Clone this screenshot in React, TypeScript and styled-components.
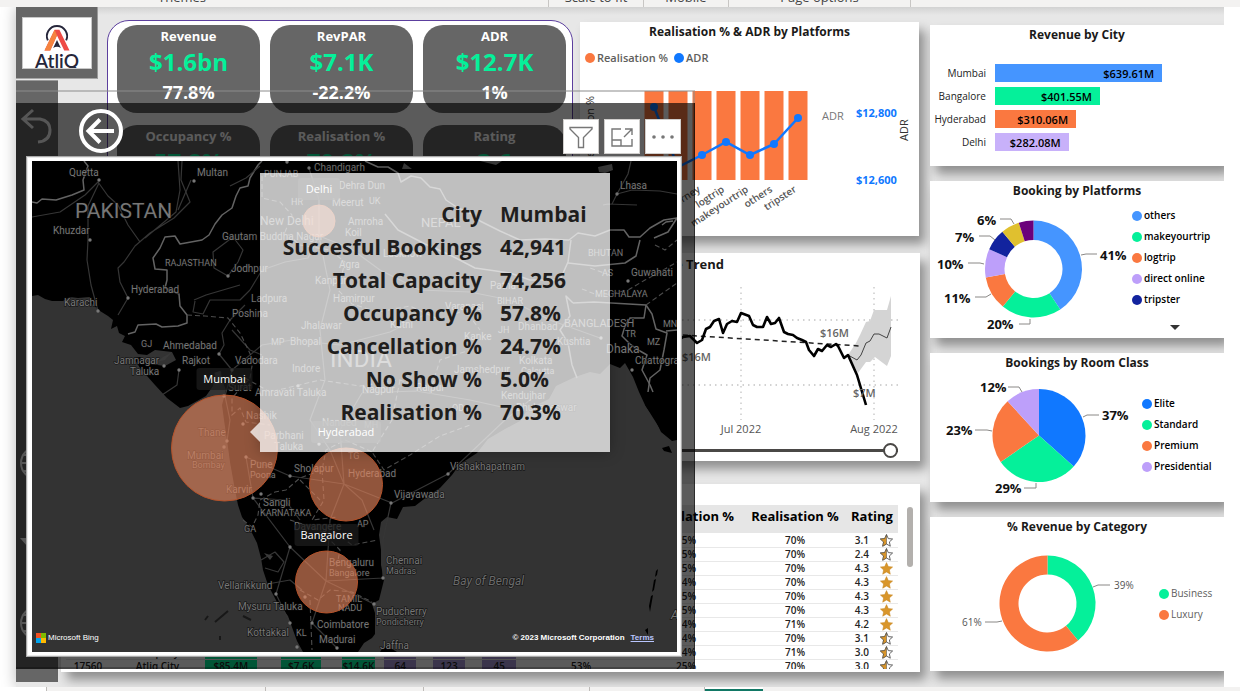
import React from "react";
import styled, { createGlobalStyle } from "styled-components";

const UI = `"Segoe UI", "Open Sans", "Noto Sans", sans-serif`;
const MAP = `Roboto, "Noto Sans", sans-serif`;

const C = {
  orange: "#fa7840",
  green: "#05f09a",
  blue: "#4595ff",
  deepBlue: "#1078ff",
  lilac: "#bd9ffa",
  navy: "#12239e",
  yellow: "#e0c02f",
  purple: "#6b007b",
  slate: "#666666",
  ink: "#252423",
};

const GlobalStyle = createGlobalStyle`
  * { box-sizing: border-box; }
  body { margin: 0; background: #fff; font-family: ${UI}; color: ${C.ink}; }
  button { font: inherit; padding: 0; border: 0; background: none; cursor: pointer; }
  ul, dl, h2, p { margin: 0; padding: 0; list-style: none; }
`;

/* ---------- frame ---------- */

const Page = styled.div`
  display: flex;
  flex-direction: column;
  min-height: 100vh;
  overflow: hidden;
`;

const Ribbon = styled.header`
  display: grid;
  grid-template-columns: 364px 185px 95px 85px 182px 1fr;
  align-content: end;
  height: 7px;
  overflow: hidden;
  background: #f3f2f1;
  position: relative;
  z-index: 3;
`;

const RibbonGroup = styled.span<{ $divider?: boolean }>`
  height: 19px;
  line-height: 18px;
  font-size: 13px;
  color: #444;
  text-align: center;
  border-right: ${(p) => (p.$divider ? "1px solid #c8c6c4" : "0")};
`;

const Workspace = styled.main`
  flex: 1;
  display: flex;
  padding: 0 16px;
  overflow: hidden;
  background: #fff;
`;

const Report = styled.div`
  position: relative;
  flex: 1;
  min-width: 0;
  display: grid;
  grid-template-columns: minmax(0, 1fr) 294px;
  column-gap: 10px;
  background: linear-gradient(#d2d2d2, #e7e7e7 8px);
  box-shadow: 0 0 14px rgba(0, 0, 0, 0.28);
  clip-path: inset(0 0 0 -16px);
`;

const Board = styled.div`
  display: grid;
  grid-template-columns: 45px 46px minmax(0, 1fr) 341px;
  grid-template-rows: 73px 173px 231px auto;
`;

const Card = styled.section`
  display: flex;
  flex-direction: column;
  background: #fff;
  box-shadow: 6px 8px 10px rgba(0, 0, 0, 0.38);
`;

const CardTitle = styled.h2`
  font-size: 12px;
  line-height: 20px;
  font-weight: 700;
  text-align: center;
  color: #1b1a19;
`;

const TabStrip = styled.nav`
  display: grid;
  grid-template-columns: 47px 219px 158px 166px 115px 58px 1fr;
  height: 4px;
  background: #f3f2f1;
`;

const TabCell = styled.span<{ $blank?: boolean; $active?: boolean }>`
  background: ${(p) => (p.$blank || p.$active ? "#fff" : "transparent")};
  border-right: ${(p) => (p.$active ? "0" : "1px solid #bebbb8")};
  border-bottom: ${(p) => (p.$active ? "2px solid #117865" : "0")};
`;

/* ---------- logo + side navigation ---------- */

const LogoBlock = styled.div`
  grid-area: 1 / 1 / 2 / 3;
  width: 82px;
  height: 72px;
  padding: 10px 5px 9px 6px;
  background: ${C.slate};
  border-bottom: 1px solid #a5a5a5;
  border-right: 1px solid #999;
`;

const LogoCard = styled.div`
  display: flex;
  flex-direction: column;
  align-items: center;
  height: 52px;
  overflow: hidden;
  background: #fff;
  border: 1px solid #c8c8c8;
`;

const LogoMark = styled.svg`
  flex: none;
  width: 28px;
  height: 26px;
  margin-top: 7px;
`;

const LogoText = styled.span`
  font-family: Lato, sans-serif;
  font-size: 19px;
  line-height: 20px;
  font-weight: 600;
  color: #26263a;
`;

const SideNav = styled.nav`
  grid-area: 2 / 1 / 5 / 2;
  display: flex;
  flex-direction: column;
  align-items: center;
  justify-content: space-between;
  width: 42px;
  margin-bottom: 5px;
  padding: 26px 0 40px;
  background: ${C.slate};
  border-top: 1px solid #999;
`;

const NavButton = styled.button`
  width: 38px;
  height: 38px;
  svg { display: block; width: 38px; height: 38px; }
`;

const NavLower = styled.div`
  display: flex;
  flex-direction: column;
  gap: 42px;
`;

/* ---------- KPI tiles ---------- */

const KpiPanel = styled.section`
  grid-area: 1 / 3 / 3 / 4;
  display: grid;
  grid-template-columns: repeat(3, minmax(0, 1fr));
  grid-auto-rows: 88px;
  gap: 12px 10px;
  margin: 13px 6px 17px 0;
  padding: 4px 6px 0 9px;
  overflow: hidden;
  background: #fff;
  border: 1px solid #5c3f9e;
  border-radius: 22px;
`;

const KpiTile = styled.div`
  display: flex;
  flex-direction: column;
  align-items: center;
  padding-top: 1px;
  background: ${C.slate};
  border-radius: 20px;
  color: #fff;
  font-weight: 700;
`;

const KpiName = styled.span`
  font-size: 13px;
  line-height: 20px;
`;
const KpiValue = styled.span`
  font-size: 24px;
  line-height: 32px;
  color: ${C.green};
`;
const KpiDelta = styled.span`
  font-size: 18px;
  line-height: 28px;
`;

/* ---------- charts ---------- */

const PlatformCard = styled(Card)`
  grid-area: 1 / 4 / 3 / 5;
  margin: 15px 1px 17px 1px;
`;

const InlineLegend = styled.ul`
  display: flex;
  gap: 6px;
  padding: 6px 5px 0;
  font-size: 11px;
  line-height: 20px;
  font-weight: 600;
  color: #605e5c;
`;

const Dot = styled.i<{ $c: string }>`
  flex: none;
  width: 10px;
  height: 10px;
  border-radius: 50%;
  background: ${(p) => p.$c};
`;

const LegendItem = styled.li`
  display: flex;
  align-items: center;
  gap: 2px;
`;

const Plot = styled.svg<{ $h: number }>`
  display: block;
  width: 100%;
  height: ${(p) => p.$h}px;
  font-family: ${UI};
`;

const TrendCard = styled(Card)`
  grid-area: 3 / 2 / 4 / 5;
  margin: 0 0 23px;
  padding-top: 1px;
`;

const TrendTitle = styled(CardTitle)`
  font-size: 13px;
  padding-right: 196px;
  text-align: right;
`;

const TrendPlotBox = styled.div`
  align-self: flex-end;
  width: 361px;
`;

const RangeInput = styled.input`
  appearance: none;
  height: 16px;
  margin: 0 22px 0 40px;
  background: transparent;
  &::-webkit-slider-runnable-track {
    height: 3px;
    background: #4a4846;
  }
  &::-webkit-slider-thumb {
    appearance: none;
    width: 15px;
    height: 15px;
    margin-top: -6px;
    border: 2px solid #4a4846;
    border-radius: 50%;
    background: #fff;
  }
`;

/* ---------- table ---------- */

const TableCard = styled(Card)`
  grid-area: 4 / 2 / 5 / 5;
  flex-direction: row;
  justify-content: space-between;
  height: 188px;
  padding: 21px 7px 0 5px;
`;

const TableScroll = styled.div`
  flex: 1;
  height: 164px;
  margin-right: 9px;
  overflow: hidden;
`;

const Grid = styled.table`
  width: 100%;
  table-layout: fixed;
  border-collapse: collapse;
  font-size: 10px;
  font-weight: 600;
  th {
    height: 28px;
    padding: 0;
    background: #e6e6e6;
    font-size: 13px;
    line-height: 22px;
    font-weight: 700;
    color: #000;
    vertical-align: top;
    white-space: nowrap;
    overflow: hidden;
  }
  td {
    height: 14px;
    padding: 0;
    line-height: 13px;
    text-align: center;
    white-space: nowrap;
    border-bottom: 1px solid #e8e8e8;
  }
  tbody { border-top: 1px solid #fff; }
`;

const Bar = styled.span<{ $c: string; $w: number }>`
  display: block;
  width: ${(p) => p.$w}%;
  background: ${(p) => p.$c};
`;

const RatingCell = styled.span`
  display: flex;
  align-items: center;
  justify-content: flex-end;
  gap: 11px;
  height: 13px;
  padding-right: 5px;
  svg { width: 13px; height: 13px; }
`;

const ScrollThumb = styled.div`
  width: 6px;
  height: 60px;
  margin-top: 2px;
  border-radius: 3px;
  background: #b3b0ad;
`;

/* ---------- right column ---------- */

const Aside = styled.aside`
  display: flex;
  flex-direction: column;
  gap: 15px;
  padding: 18px 0 12px;
`;

const CityChart = styled.div`
  display: grid;
  grid-template-columns: 56px minmax(0, 1fr);
  gap: 5px 9px;
  padding: 19px 0 15px;
`;

const CityName = styled.span`
  font-size: 10px;
  line-height: 18px;
  text-align: right;
  color: #222;
`;

const CityBar = styled.div<{ $c: string }>`
  height: 18px;
  padding-right: 8px;
  line-height: 19px;
  font-size: 11px;
  font-weight: 600;
  text-align: right;
  color: #000;
  background: ${(p) => p.$c};
`;

const Split = styled.div<{ $legend: number }>`
  display: grid;
  grid-template-columns: minmax(0, 1fr) ${(p) => p.$legend}px;
`;

const SideLegend = styled.ul<{ $top: number; $soft?: boolean }>`
  padding-top: ${(p) => p.$top}px;
  font-size: 10px;
  line-height: 21px;
  font-weight: ${(p) => (p.$soft ? 400 : 600)};
  color: ${(p) => (p.$soft ? "#605e5c" : "#000")};
  white-space: nowrap;
`;

const MoreButton = styled.button`
  display: block;
  margin: 15px 0 0 38px;
  border: 5px solid transparent;
  border-top-color: #333;
  border-bottom: 0;
`;

/* ---------- map window ---------- */

const MapWindow = styled.section`
  position: absolute;
  z-index: 2;
  top: 83px;
  bottom: 18px;
  left: 0;
  right: 529px;
  display: flex;
  flex-direction: column;
`;

const WindowEdge = styled.div`
  height: 13px;
  border-top: 2px solid rgba(140, 140, 140, 0.5);
  border-right: 2px solid rgba(140, 140, 140, 0.5);
`;

const Shade = styled.div`
  flex: 1;
  display: flex;
  flex-direction: column;
  background: rgba(0, 0, 0, 0.645);
  border-right: 1px solid rgba(0, 0, 0, 0.5);
  border-bottom: 2px solid rgba(0, 0, 0, 0.25);
`;

const WindowBar = styled.div`
  display: flex;
  align-items: flex-end;
  justify-content: space-between;
  height: 53px;
  padding: 0 13px 2px 62px;
`;

const BackButton = styled.button`
  width: 46px;
  height: 46px;
  svg { display: block; width: 46px; height: 46px; }
`;

const Tools = styled.div`
  display: flex;
  gap: 5px;
`;

const ToolButton = styled.button`
  width: 36px;
  height: 35px;
  background: #fff;
  border: 1px solid #d0cecc;
  svg { display: block; margin: auto; width: 24px; height: 24px; }
`;

const MapFrame = styled.div`
  flex: 1;
  display: flex;
  margin: 0 12px 10px 10px;
  padding: 4px 4px 4px 5px;
  background: #fff;
  border: 1px solid #a9a9a9;
  box-shadow: inset 0 0 0 1px #e9e9e9;
`;

const MapArea = styled.div`
  position: relative;
  flex: 1;
  overflow: hidden;
  background: #000;
`;

const MapSvg = styled.svg`
  position: absolute;
  inset: 0;
  width: 100%;
  height: 100%;
  font-family: ${MAP};
`;

const Tooltip = styled.dl`
  position: absolute;
  left: 228px;
  top: 12px;
  width: 350px;
  height: 279px;
  display: grid;
  grid-template-columns: 222px 1fr;
  grid-auto-rows: 33px;
  align-content: start;
  column-gap: 18px;
  padding-top: 25px;
  background: rgba(255, 255, 255, 0.75);
  box-shadow: 0 0 14px rgba(0, 0, 0, 0.3);
  font-size: 21px;
  line-height: 33px;
  font-weight: 700;
  color: #1f1e1d;
  dt { text-align: right; white-space: nowrap; }
  dd { margin: 0; }
  &::before {
    content: "";
    position: absolute;
    left: -10px;
    top: 249px;
    border: 10px solid transparent;
    border-left: 0;
    border-right-color: rgba(255, 255, 255, 0.75);
  }
`;

const Credit = styled.div<{ $right?: boolean }>`
  position: absolute;
  bottom: 6px;
  ${(p) => (p.$right ? "right: 23px;" : "left: 4px;")}
  display: flex;
  align-items: center;
  gap: ${(p) => (p.$right ? 6 : 2)}px;
  font-family: "Liberation Sans", Arial, sans-serif;
  font-size: 8px;
  line-height: 16px;
  font-weight: ${(p) => (p.$right ? 700 : 400)};
  color: #fff;
  a { color: #b9c6ff; }
  svg { width: 10px; height: 10px; }
`;

/* ---------- data ---------- */

const kpis = [
  { name: "Revenue", value: "$1.6bn", delta: "77.8%" },
  { name: "RevPAR", value: "$7.1K", delta: "-22.2%" },
  { name: "ADR", value: "$12.7K", delta: "1%" },
  { name: "Occupancy %", value: "57.8%" },
  { name: "Realisation %", value: "70.2%" },
  { name: "Rating", value: "3.6" },
];

const cities = [
  { name: "Mumbai", value: 639.61, c: C.blue },
  { name: "Bangalore", value: 401.55, c: C.green },
  { name: "Hyderabad", value: 310.06, c: C.orange },
  { name: "Delhi", value: 282.08, c: "#c8b1fa" },
];

const tip: [string, string][] = [
  ["City", "Mumbai"],
  ["Succesful Bookings", "42,941"],
  ["Total Capacity", "74,256"],
  ["Occupancy %", "57.8%"],
  ["Cancellation %", "24.7%"],
  ["No Show %", "5.0%"],
  ["Realisation %", "70.3%"],
];

const columns: [string, number | undefined][] = [
  ["ID", 44], ["Property", undefined], ["Revenue", 76], ["RevPAR", 61], ["ADR", 42], ["DBRN", 49],
  ["DSRN", 49], ["DURN", 52], ["Occupancy %", 94], ["Cancellation %", 116], ["Realisation %", 102], ["Rating", 52],
];

const rows: string[][] = [
  ["16559", "Atliq Exotica", "$118M", "$8.4K", "$14.5K", "86", "148", "60", "57%", "25%", "70%", "3.1"],
  ["16560", "Atliq City", "$52.3M", "$5.2K", "$11.7K", "62", "118", "43", "45%", "25%", "70%", "2.4"],
  ["16561", "Atliq Blu", "$57.1M", "$7.2K", "$10.9K", "67", "102", "47", "66%", "25%", "70%", "4.3"],
  ["16562", "Atliq Bay", "$59.7M", "$7.8K", "$11.8K", "61", "92", "43", "66%", "24%", "70%", "4.3"],
  ["16563", "Atliq Palace", "$101M", "$8.0K", "$12.1K", "91", "137", "64", "66%", "25%", "70%", "4.3"],
  ["17558", "Atliq Grands", "$81.8M", "$7.3K", "$15.4K", "62", "116", "43", "53%", "25%", "70%", "4.3"],
  ["17559", "Atliq Exotica", "$93.1M", "$9.5K", "$14.4K", "71", "107", "50", "66%", "24%", "71%", "4.2"],
  ["17561", "Atliq Blu", "$71.2M", "$6.9K", "$15.4K", "55", "103", "39", "45%", "24%", "70%", "3.1"],
  ["17564", "Atliq City", "$80.4M", "$8.1K", "$14.7K", "59", "110", "38", "54%", "24%", "71%", "3.0"],
  ["17560", "Atliq City", "$85.4M", "$7.6K", "$14.6K", "64", "123", "45", "53%", "25%", "70%", "3.0"],
];

/* ---------- drawings ---------- */

type Slice = { v: number; c: string };

const point = (cx: number, cy: number, r: number, f: number) => {
  const a = f * 2 * Math.PI;
  return `${(cx + r * Math.sin(a)).toFixed(2)} ${(cy - r * Math.cos(a)).toFixed(2)}`;
};

function Ring({ cx, cy, r, hole, slices }: { cx: number; cy: number; r: number; hole: number; slices: Slice[] }) {
  const total = slices.reduce((s, x) => s + x.v, 0);
  let from = 0;
  return (
    <g>
      {slices.map((s) => {
        const a = from;
        const b = from + s.v / total;
        from = b;
        const big = b - a > 0.5 ? 1 : 0;
        const d =
          hole > 0
            ? `M${point(cx, cy, r, a)}A${r} ${r} 0 ${big} 1 ${point(cx, cy, r, b)}L${point(cx, cy, hole, b)}A${hole} ${hole} 0 ${big} 0 ${point(cx, cy, hole, a)}Z`
            : `M${cx} ${cy}L${point(cx, cy, r, a)}A${r} ${r} 0 ${big} 1 ${point(cx, cy, r, b)}Z`;
        return <path key={s.c} d={d} fill={s.c} />;
      })}
    </g>
  );
}

type Callout = { t: string; x: number; y: number; d: string };

function Callouts({ items, soft }: { items: Callout[]; soft?: boolean }) {
  return (
    <g>
      {items.map((c) => (
        <g key={c.t}>
          <path d={c.d} fill="none" stroke="#8a8886" strokeWidth="1" />
          <text x={c.x} y={c.y} fontSize={soft ? 10 : 13} fontWeight={soft ? 400 : 700} fill={soft ? "#555" : "#111"}>
            {c.t}
          </text>
        </g>
      ))}
    </g>
  );
}

function Legend({ items, top, soft }: { items: [string, string][]; top: number; soft?: boolean }) {
  return (
    <SideLegend $top={top} $soft={soft}>
      {items.map(([t, c]) => (
        <LegendItem key={t}>
          <Dot $c={c} />
          {t}
        </LegendItem>
      ))}
    </SideLegend>
  );
}

const STAR = "M6.5 0.6l1.8 4 4.3.4-3.2 2.9.9 4.3-3.8-2.2-3.8 2.2.9-4.3L.4 5l4.3-.4z";

function Star({ full }: { full: boolean }) {
  return full ? (
    <svg viewBox="0 0 13 13"><path d={STAR} fill="#d9962b" stroke="#c58520" strokeWidth=".5" /></svg>
  ) : (
    <svg viewBox="0 0 13 13">
      <path d={STAR} fill="#fff" stroke="#555" strokeWidth=".9" />
      <path d="M6.5.6v9.4l-3.8 2.2.9-4.3L.4 5l4.3-.4z" fill="#d9962b" stroke="#444" strokeWidth=".5" />
    </svg>
  );
}

const globe = (
  <svg viewBox="0 0 38 38" fill="none" stroke="#f2f2f2" strokeWidth="2">
    <circle cx="19" cy="19" r="16" />
    <ellipse cx="19" cy="19" rx="8" ry="16" />
    <path d="M3 19h32M6 11h26M6 27h26" />
  </svg>
);

function PlatformPlot() {
  const xs = [654, 678, 702, 726, 750, 774, 798];
  const ys = [107, 167, 155, 142, 155, 144, 118];
  const names = ["direct offline", "direct online", "journey", "logtrip", "makeyourtrip", "others", "tripster"];
  return (
    <Plot $h={167} viewBox="580 68 339 167">
      {xs.map((x) => (
        <rect key={x} x={x - 9.5} y="91" width="19" height="89" fill={C.orange} />
      ))}
      <polyline points={xs.map((x, i) => `${x},${ys[i]}`).join(" ")} fill="none" stroke={C.deepBlue} strokeWidth="2.5" />
      {xs.map((x, i) => (
        <circle key={x} cx={x} cy={ys[i]} r="4" fill={C.deepBlue} />
      ))}
      {xs.slice(2).map((x, i) => (
        <text key={x} transform={`translate(${x - 1} 191) rotate(-33)`} textAnchor="end" fontSize="10" fontWeight="600" fill="#555">
          {names[i + 2]}
        </text>
      ))}
      <text transform="translate(594 164) rotate(-90)" fontSize="11" fill="#333">Realisation %</text>
      <text transform="translate(908 141) rotate(-90)" fontSize="11" fill="#333">ADR</text>
      <text x="822" y="120" fontSize="11" fill="#777">ADR</text>
      <g fontSize="11" fontWeight="700" fill={C.deepBlue}>
        <text x="856" y="117">$12,800</text>
        <text x="856" y="184">$12,600</text>
      </g>
    </Plot>
  );
}

function TrendPlot() {
  return (
    <Plot $h={168} viewBox="559 274 361 168">
      <path d="M741 287V420M874 287V420M682 320H900M682 385H900" stroke="#c4c4c4" strokeWidth="1.3" strokeDasharray="1.5 4" />
      <path d="M848 355L856 343 860 335 866 322 870 321 874 310 887 310 891 296V356L887 366 879 360 875 357 870 362 866 362 858 373Z" fill="#d4d4d4" />
      <path d="M620 331L682 335 860 346" fill="none" stroke="#222" strokeWidth="1.5" strokeDasharray="5 4" />
      <path d="M848 355L857 360 861 355 866 343 870 341 874 334 879 334 887 338 891 327" fill="none" stroke="#444" strokeWidth="1" />
      <path
        d="M670 334L676 342 683 337 690 336 697 343 702 340 706 329 710 327 714 321 719 319 723 333 727 324 732 321 737 322 741 313 749 316 753 325 757 327 763 327 767 317 771 324 775 323 779 318 784 332 788 334 793 335 797 338 802 340 806 342 809 350 814 356 818 349 822 351 827 345 831 347 836 344 838 346 844 358 848 355 857 375 866 405"
        fill="none" stroke="#000" strokeWidth="2.6" strokeLinejoin="round"
      />
      <g fontSize="11" fontWeight="600" fill="#666">
        <text x="682" y="361">$16M</text>
        <text x="820" y="337">$16M</text>
        <text x="853" y="397">$7M</text>
      </g>
      <g fontSize="11" fill="#555" textAnchor="middle">
        <text x="741" y="433">Jul 2022</text>
        <text x="874" y="433">Aug 2022</text>
      </g>
    </Plot>
  );
}

/* place name, x, baseline, size */
const places: [string, number, number, number][] = [
  ["Quetta", 69, 176, 10], ["Multan", 197, 176, 10], ["PAKISTAN", 75, 218, 21], ["Khuzdar", 53, 234, 10],
  ["RAJASTHAN", 165, 266, 9], ["Jodhpur", 231, 272, 10], ["Hyderabad", 131, 293, 10], ["Karachi", 64, 306, 10],
  ["Gautam Buddha Nagar", 222, 240, 10], ["New Delhi", 260, 225, 12], ["Ladpura", 251, 302, 10], ["Poshina", 232, 317, 10],
  ["GJ", 141, 347, 9], ["Ahmedabad", 163, 349, 10], ["Jamnagar", 114, 364, 10], ["Taluka", 130, 375, 10],
  ["Rajkot", 182, 364, 10], ["Vadodara", 235, 364, 10], ["Surat", 228, 391, 10], ["Amravati Taluka", 255, 396, 10],
  ["MP", 271, 345, 9], ["Bhopal", 290, 345, 10], ["Indore", 292, 372, 10], ["INDIA", 330, 367, 24],
  ["Nashik", 246, 419, 10], ["Thane", 198, 436, 10], ["Mumbai", 187, 459, 10], ["Bombay", 192, 468, 9],
  ["Pune", 250, 468, 10], ["Poona", 250, 478, 9], ["Karvir", 226, 493, 10], ["Parbhani", 264, 439, 10],
  ["Taluka", 274, 450, 10], ["Sholapur", 294, 472, 10], ["Sangli", 263, 506, 10], ["KARNATAKA", 260, 516, 9],
  ["GA", 244, 532, 9], ["Davangere", 294, 530, 10], ["Vellarikkund", 218, 589, 10], ["Mysuru Taluka", 238, 610, 10],
  ["Kottakkal", 247, 636, 10], ["KL", 296, 636, 9], ["Coimbatore", 317, 628, 10], ["Madurai", 319, 643, 10],
  ["Jaffna", 380, 649, 10], ["Puducherry", 376, 615, 10], ["Pondicherry", 376, 625, 9], ["TAMIL", 336, 602, 9],
  ["NADU", 338, 611, 9], ["Bengaluru", 329, 566, 10], ["Bangalore", 329, 576, 9], ["Chennai", 386, 564, 10],
  ["Madras", 386, 574, 9], ["AP", 357, 527, 9], ["TG", 348, 459, 9], ["Hyderabad", 348, 477, 10],
  ["Vijayawada", 394, 498, 10], ["Vishakhapatnam", 450, 470, 10], ["Nanded", 322, 426, 10], ["MH", 364, 428, 9],
  ["Chandigarh", 314, 171, 10], ["PUNJAB", 264, 177, 9], ["Dehra Dun", 339, 189, 10], ["HR", 291, 205, 9],
  ["Meerut", 332, 206, 10], ["UK", 369, 204, 9], ["Amroha", 348, 225, 10], ["Koil", 345, 236, 10],
  ["NEPAL", 421, 227, 13], ["Lucknow", 383, 257, 10], ["Agra", 339, 268, 10], ["Kanpur", 315, 284, 10],
  ["Hamirpur", 333, 302, 10], ["Varanasi", 445, 310, 10], ["BIHAR", 497, 304, 9], ["Patna", 490, 289, 10],
  ["Jhalawar", 301, 329, 10], ["Katni", 390, 328, 10], ["Kanke", 464, 340, 10], ["JH", 498, 333, 9],
  ["Dhanbad", 518, 330, 10], ["Kolkata", 519, 364, 10], ["Calcutta", 521, 374, 9], ["Jamshedpur", 454, 373, 10],
  ["Nagpur", 362, 393, 10], ["Raipur", 416, 391, 10], ["Kendujhar", 501, 399, 10], ["OD", 452, 411, 9],
  ["Bhubaneswar", 516, 411, 10], ["Kushtia", 557, 345, 10], ["BANGLADESH", 564, 327, 11], ["Dhaka", 606, 353, 12],
  ["Chattogram", 635, 364, 10], ["TR", 625, 337, 9], ["MZ", 647, 345, 9], ["MN", 663, 327, 9],
  ["MEGHALAYA", 595, 297, 9], ["AS", 602, 276, 9], ["Guwahati", 631, 276, 10], ["BHUTAN", 588, 256, 9],
  ["Lhasa", 620, 189, 10],
];

const towns: [number, number][] = [
  [99, 180], [194, 181], [90, 240], [98, 311], [128, 298], [228, 276], [219, 354], [179, 370], [164, 366], [224, 396],
  [232, 370], [287, 162], [309, 168], [617, 194], [227, 441], [224, 447], [243, 424], [246, 457], [290, 476], [253, 498],
  [261, 494], [290, 547], [276, 594], [290, 623], [297, 647], [448, 474], [391, 503], [383, 578], [374, 604], [312, 623],
  [337, 648], [632, 370], [628, 281], [298, 386], [319, 444], [601, 338], [305, 597],
];

const cityBubbles = [
  { x: 224.5, y: 448, r: 53.5 },
  { x: 346, y: 484.5, r: 37 },
  { x: 326.5, y: 582, r: 31.5 },
  { x: 319, y: 221, r: 16.5 },
];

const bubbleNames = [
  { t: "Delhi", x: 319, y: 189, w: 42 },
  { t: "Mumbai", x: 224.5, y: 379, w: 56 },
  { t: "Hyderabad", x: 346, y: 432, w: 70 },
  { t: "Bangalore", x: 326.5, y: 535, w: 64 },
];

function MapDrawing() {
  return (
    <MapSvg viewBox="32 161 645 491" preserveAspectRatio="xMidYMid slice">
      <g fill="#333">
        <path d="M32 296L38 295 45 299 52 301 63 301 70 297 78 298 90 297 92 304 100 311 108 316 113 320 111 329 117 326 119 333 125 336 122 342 131 345 138 354 147 355 155 350 172 352 176 360 165 366 150 364 140 357 134 358 140 368 155 385 167 398 180 408 188 406 197 401 206 396 213 386 215 373 221 371 222 380 226 390 222 405 224 420 227 440 230 462 235 490 238 505 242 517 250 529 257 543 261 558 263 570 268 585 277 602 288 616 293 630 297 641 303 652H32Z" />
        <path d="M358 652L364 643 372 638 375 634 375 613 372 604 379 600 384 580 381 565 381 550 379 535 381 522 387 517 397 519 403 507 415 506 428 496 440 488 452 475 460 464 477 453 488 439 505 429 520 421 528 409 549 399 556 386 575 377 590 372 600 374 610 364 620 368 625 363 633 377 639 392 645 405 655 419 661 432 672 441 677 440V652Z" />
      </g>
      <g fill="#000">
        <path d="M380 652L384 646 392 649 397 652ZM656 571L658 569 657 575 655 577ZM654 580L656 579 654 590 652 592ZM651 596L653 595 650 612 649 606ZM645 630L648 628 648 635ZM645 405L660 409 668 425 674 436 662 432ZM662 448L669 446 672 453 664 451Z" />
        <path d="M205 620L208 616M215 622L228 611M243 616L251 620M220 640V636" stroke="#181818" strokeWidth="2" />
      </g>
      <g fill="none" stroke="#636363" strokeWidth="1.5" strokeLinejoin="round">
        <path d="M32 202L37 203 42 199 56 200 72 195 84 190 83 180 88 166 84 161" />
        <path d="M262 161L258 165 250 178 248 186 240 188 236 196 232 208 222 215 215 224 209 235 202 240 180 244 175 236 165 237 160 248 153 258 155 269 167 270 167 280 165 288 179 294 180 306 187 315 187 323 178 326 162 327 156 324 138 325 135 332 128 334" />
        <path d="M365 161L378 167 388 167 398 173 401 182 411 176 421 178 430 187 440 189 446 200 458 208 470 213 480 221 500 231 520 240 545 239 569 240 578 233 595 236 610 230 624 230 629 237 640 237 650 228 664 220 677 218" />
        <path d="M385 214L398 230 425 244 450 255 475 268 510 273 530 280 560 280 568 262 571 240" />
        <path d="M568 263L595 266 625 263 636 256 640 240M573 303L594 302 646 305 644 318 630 318 625 326 622 336 630 344 640 351 647 355 642 370 650 385 653 392" />
        <path d="M573 303L566 296 570 316 560 330 568 343 572 365 577 378M646 305L652 314 656 329 667 333 664 350 660 370 650 378 648 392M662 225L666 222 673 221M677 218L668 232 654 238M677 330L666 331" />
      </g>
      <g fill="none" stroke="#363636" strokeWidth="1.2" strokeLinejoin="round">
        <path d="M32 217L60 212 85 195 98 182 108 196 118 205 128 225 140 242M99 183L88 206 88 240 87 260 91 285 98 311M182 161L181 180 190 202 174 218 150 233 135 246 124 262 118 268 120 282 128 298 118 315M178 161L180 190 176 212 145 238" />
        <path d="M191 180L178 210M228 276L214 268 213 252 233 237 243 250 238 262 228 276M194 300L206 295 240 285M195 301L193 312 203 314 210 300 240 300 250 290M219 354L224 345 222 333 230 320 245 305M219 354L232 370 225 396 230 420 227 441M179 370L177 385 162 395M230 186L246 178 260 166" />
        <path d="M250 290L262 270 285 262 308 258 319 236 319 200 309 168M319 236L350 248 380 270 420 290 470 292 510 300 550 320 600 338M319 236L330 290 320 330 325 380 310 420 330 450 344 484M232 370L262 345 292 340 340 345 390 332 430 312M232 330L250 350 262 355M246 457L290 476 344 484 392 503 448 474 505 420 530 400M246 457L253 498 290 547 326 581 383 578M290 547L276 594 290 623M326 581L312 623 337 648M326 581L374 604M344 484L330 520 326 581M253 498L285 500 300 520M391 503L383 540 383 578M362 393L416 391 470 400 520 411M362 393L340 430 344 484M344 484L362 500 374 530" />
        <path d="M261 560L275 552 284 562 278 572 265 568M262 585L290 580 302 590M603 205L608 204 637 205M612 204L617 194 628 174 631 161M617 194L632 190 660 191 677 194" />
      </g>
      <g fill="none" stroke="#4c4c4c" strokeWidth="1.1" strokeDasharray="5 3">
        <path d="M187 315L205 316 228 318 240 333 246 345 253 360 250 378 232 398 232 415 240 408 246 422 270 425" />
        <path d="M262 176L262 198 280 202 292 215 285 232 300 245 330 250 345 262 338 290 352 304 378 312 410 306 440 320 465 310 480 330M245 378L270 392 320 380 360 386 400 380 430 392 440 360 470 350M400 380L392 420 372 452 384 470 410 455 440 436 470 425M243 520L252 527 258 515 260 500 275 492 286 490 300 478 322 470 326 450 345 440 372 452M322 470L324 500 312 520 338 517M300 480L320 500M335 532L352 545 378 540M300 590L318 600 330 590 352 592 372 602M310 600L312 650M290 520L320 530 340 550 335 575" />
        <path d="M582 289L600 296 628 290 645 280 660 272 677 262M646 305L660 295 677 283M655 245L665 250 677 240M610 275L590 268" />
      </g>
      <g fill="#3a3a3a">
        <path d="M598 167L612 164 613 170 605 173 599 172ZM480 161L496 165 502 161ZM404 163L412 169 402 169ZM214 373L220 371 221 378ZM264 553L273 556 270 560Z" />
        <path d="M172 352L165 360 157 362 163 357Z" />
      </g>
      <g fill="#777">
        {towns.map(([x, y]) => (
          <circle key={`${x}-${y}`} cx={x} cy={y} r="1.7" />
        ))}
      </g>
      <g fill="#767676" stroke="#0a0a0a" strokeWidth="1.4" paintOrder="stroke" strokeOpacity=".7">
        {places.map(([t, x, y, s]) => (
          <text key={`${t}-${x}`} x={x} y={y} fontSize={s}>{t}</text>
        ))}
        <text x="453" y="585" fontSize="12" fontStyle="italic" fill="#6b6b6b">Bay of Bengal</text>
        <text x="671" y="619" fontSize="12" fontStyle="italic">A</text>
      </g>
      <g fill="rgb(222,130,92)" fillOpacity=".65" stroke="#b5522a">
        {cityBubbles.map((b) => (
          <circle key={b.x} cx={b.x} cy={b.y} r={b.r - 0.5} />
        ))}
      </g>
      <g fontFamily={UI} fontSize="11" textAnchor="middle">
        {bubbleNames.map((b) => (
          <g key={b.t}>
            <rect x={b.x - b.w / 2} y={b.y - 11} width={b.w} height="22" rx="3" fill="#1c1c1c" fillOpacity=".75" />
            <text x={b.x} y={b.y + 4} fill="#fff">{b.t}</text>
          </g>
        ))}
      </g>
    </MapSvg>
  );
}

/* ---------- page ---------- */

export default function App() {
  return (
    <Page>
      <GlobalStyle />
      <Ribbon>
        <RibbonGroup>Themes</RibbonGroup>
        <RibbonGroup $divider />
        <RibbonGroup $divider>Scale to fit</RibbonGroup>
        <RibbonGroup $divider>Mobile</RibbonGroup>
        <RibbonGroup $divider>Page options</RibbonGroup>
      </Ribbon>

      <Workspace>
        <Report>
          <Board>
            <LogoBlock>
              <LogoCard>
                <LogoMark viewBox="0 0 28 27">
                  <path d="M4.5 16A10.5 10.5 0 1 1 23.500 16" fill="none" stroke="#26263a" strokeWidth="2" />
                  <path d="M14 15.500L18 24Q14 21 10 24Z" fill="#26263a" />
                  <path d="M11.500 5H16.500L27 26.500H21.500L14 11 7 26.500H1Z" fill="#ee4b45" />
                  <path d="M11.500 5L14 11 7 26.500H1Z" fill="#f5833f" />
                </LogoMark>
                <LogoText>AtliQ</LogoText>
              </LogoCard>
            </LogoBlock>

            <SideNav aria-label="Report">
              <NavButton aria-label="Reset">
                <svg viewBox="0 0 38 38" fill="none" stroke="#f2f2f2" strokeWidth="3">
                  <path d="M15 3L5 12 15 21M5 12H22Q32 14 32 23 32 34 20 35" />
                </svg>
              </NavButton>
              <NavLower>
                <NavButton aria-label="Regions">{globe}</NavButton>
                <NavButton aria-label="Filters">
                  <svg viewBox="0 0 38 38"><path d="M2 14H36L22 30V38H16V30Z" fill="#f2f2f2" /></svg>
                </NavButton>
                <NavButton aria-label="Web">{globe}</NavButton>
              </NavLower>
            </SideNav>

            <KpiPanel>
              {kpis.map((k) => (
                <KpiTile key={k.name}>
                  <KpiName>{k.name}</KpiName>
                  <KpiValue>{k.value}</KpiValue>
                  {k.delta && <KpiDelta>{k.delta}</KpiDelta>}
                </KpiTile>
              ))}
            </KpiPanel>

            <PlatformCard>
              <CardTitle>Realisation % &amp; ADR by Platforms</CardTitle>
              <InlineLegend>
                <LegendItem><Dot $c={C.orange} />Realisation %</LegendItem>
                <LegendItem><Dot $c={C.deepBlue} />ADR</LegendItem>
              </InlineLegend>
              <PlatformPlot />
            </PlatformCard>

            <TrendCard>
              <TrendTitle>Revenue Trend</TrendTitle>
              <TrendPlotBox><TrendPlot /></TrendPlotBox>
              <RangeInput type="range" aria-label="Date range" defaultValue={100} />
            </TrendCard>

            <TableCard>
              <TableScroll>
                <Grid>
                  <colgroup>
                    {columns.map(([n, w]) => <col key={n} width={w} />)}
                  </colgroup>
                  <thead>
                    <tr>{columns.map(([n]) => <th key={n}>{n}</th>)}</tr>
                  </thead>
                  <tbody>
                    {rows.map((r) => (
                      <tr key={r[0]}>
                        {r.map((v, i) => (
                          <td key={columns[i][0]}>
                            {i >= 2 && i <= 7 ? (
                              <Bar $c={i < 5 ? C.green : "#a596d6"} $w={i === 2 ? 68 : i === 4 ? 78 : 66}>{v}</Bar>
                            ) : i === 11 ? (
                              <RatingCell>{v}<Star full={Number(v) > 4} /></RatingCell>
                            ) : v}
                          </td>
                        ))}
                      </tr>
                    ))}
                  </tbody>
                </Grid>
              </TableScroll>
              <ScrollThumb />
            </TableCard>
          </Board>

          <Aside>
            <Card>
              <CardTitle>Revenue by City</CardTitle>
              <CityChart>
                {cities.map((c) => (
                  <React.Fragment key={c.name}>
                    <CityName>{c.name}</CityName>
                    <CityBar $c={c.c} style={{ width: `${(c.value / 639.61) * 73}%` }}>${c.value.toFixed(2)}M</CityBar>
                  </React.Fragment>
                ))}
              </CityChart>
            </Card>

            <Card>
              <CardTitle>Booking by Platforms</CardTitle>
              <Split $legend={92}>
                <Plot $h={137} viewBox="930 202 202 137">
                  <Ring cx={1033.5} cy={270} r={48.5} hole={29} slices={[
                    { v: 40.7, c: C.blue }, { v: 20.2, c: C.green }, { v: 11.3, c: C.orange }, { v: 9.5, c: C.lilac },
                    { v: 7.2, c: C.navy }, { v: 6.2, c: C.yellow }, { v: 4.9, c: C.purple },
                  ]} />
                  <Callouts items={[
                    { t: "6%", x: 977, y: 226, d: "M1000 220H1011L1014 225" },
                    { t: "7%", x: 955, y: 243, d: "M979 237H990L995 241" },
                    { t: "10%", x: 937, y: 270, d: "M968 264H980L984 265" },
                    { t: "11%", x: 944, y: 304, d: "M975 298H986L991 295" },
                    { t: "20%", x: 987, y: 330, d: "M1019 325H1030V320" },
                    { t: "41%", x: 1100, y: 261, d: "M1081 256L1086 255H1097" },
                  ]} />
                </Plot>
                <div>
                  <Legend top={4} items={[["others", C.blue], ["makeyourtrip", C.green], ["logtrip", C.orange], ["direct online", C.lilac], ["tripster", C.navy]]} />
                  <MoreButton aria-label="More platforms" />
                </div>
              </Split>
            </Card>

            <Card>
              <CardTitle>Bookings by Room Class</CardTitle>
              <Split $legend={82}>
                <Plot $h={129} viewBox="930 373 212 129">
                  <Ring cx={1039} cy={435.5} r={46.5} hole={0} slices={[
                    { v: 36.6, c: C.deepBlue }, { v: 28.8, c: C.green }, { v: 22.8, c: C.orange }, { v: 11.8, c: C.lilac },
                  ]} />
                  <Callouts items={[
                    { t: "12%", x: 980, y: 392, d: "M1008 387H1019L1022 392" },
                    { t: "37%", x: 1102, y: 420, d: "M1083 417L1087 415H1099" },
                    { t: "23%", x: 946, y: 435, d: "M975 430H987L992 431" },
                    { t: "29%", x: 995, y: 493, d: "M1024 488H1036V483" },
                  ]} />
                </Plot>
                <Legend top={20} items={[["Elite", C.deepBlue], ["Standard", C.green], ["Premium", C.orange], ["Presidential", C.lilac]]} />
              </Split>
            </Card>

            <Card>
              <CardTitle>% Revenue by Category</CardTitle>
              <Split $legend={65}>
                <Plot $h={134} viewBox="930 537 229 134">
                  <Ring cx={1047.5} cy={603.5} r={48} hole={29} slices={[{ v: 39, c: C.green }, { v: 61, c: C.orange }]} />
                  <Callouts soft items={[
                    { t: "39%", x: 1114, y: 589, d: "M1093 587L1098 585H1110" },
                    { t: "61%", x: 962, y: 626, d: "M985 622H997L1002 621" },
                  ]} />
                </Plot>
                <Legend top={46} soft items={[["Business", C.green], ["Luxury", C.orange]]} />
              </Split>
            </Card>
          </Aside>

          <MapWindow aria-label="City map">
            <WindowEdge />
            <Shade>
              <WindowBar>
                <BackButton aria-label="Back">
                  <svg viewBox="0 0 46 46" fill="none" stroke="#fff">
                    <circle cx="23" cy="23" r="20" strokeWidth="4" />
                    <path d="M36 23H11M22 11.500L10.500 23 22 34.500" strokeWidth="4" />
                  </svg>
                </BackButton>
                <Tools>
                  <ToolButton aria-label="Filter">
                    <svg viewBox="0 0 24 24" fill="none" stroke="#777" strokeWidth="1.4">
                      <path d="M1 2.500H23V4L14.500 12.500V22.500H9.500V12.500L1 4Z" />
                    </svg>
                  </ToolButton>
                  <ToolButton aria-label="Focus mode">
                    <svg viewBox="0 0 24 24" fill="none" stroke="#777" strokeWidth="1.4">
                      <path d="M11 4H2V21H22V14M2 15H11V21M15 4H22V10M22 4L14 12" />
                    </svg>
                  </ToolButton>
                  <ToolButton aria-label="More options">
                    <svg viewBox="0 0 24 24" fill="#777">
                      <circle cx="3" cy="12" r="1.800" /><circle cx="12" cy="12" r="1.800" /><circle cx="21" cy="12" r="1.800" />
                    </svg>
                  </ToolButton>
                </Tools>
              </WindowBar>
              <MapFrame>
                <MapArea>
                  <MapDrawing />
                  <Tooltip>
                    {tip.map(([k, v]) => (
                      <React.Fragment key={k}>
                        <dt>{k}</dt>
                        <dd>{v}</dd>
                      </React.Fragment>
                    ))}
                  </Tooltip>
                  <Credit>
                    <svg viewBox="0 0 10 10">
                      <rect width="5" height="5" fill="#f25022" /><rect x="5" width="5" height="5" fill="#7fba00" />
                      <rect y="5" width="5" height="5" fill="#00a4ef" /><rect x="5" y="5" width="5" height="5" fill="#ffb900" />
                    </svg>
                    Microsoft Bing
                  </Credit>
                  <Credit $right>
                    © 2023 Microsoft Corporation <a href="#terms">Terms</a>
                  </Credit>
                </MapArea>
              </MapFrame>
            </Shade>
          </MapWindow>
        </Report>
      </Workspace>

      <TabStrip aria-label="Pages">
        <TabCell $blank />
        <TabCell />
        <TabCell />
        <TabCell />
        <TabCell />
        <TabCell $active />
      </TabStrip>
    </Page>
  );
}
